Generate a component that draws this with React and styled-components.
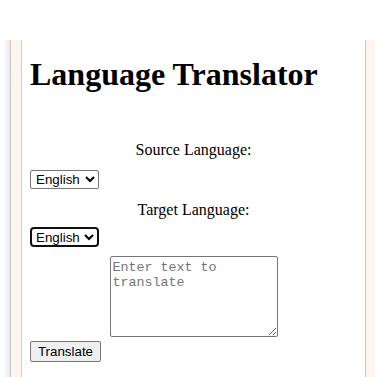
import styled, { createGlobalStyle } from "styled-components";

const GlobalStyle = createGlobalStyle`
    html, body {
        margin: 0;
        padding: 0;
        background: #fff;
        font-family: "Liberation Serif", "Times New Roman", serif;
    }
`;

const Page = styled.div`
    padding-top: 40px;
    height: 377px;
    box-sizing: border-box;
    overflow: hidden;
`;

const Shell = styled.div`
    height: 100%;
    padding-left: 10px;
    background: linear-gradient(to right, #fff 3px, #ebebeb 10px) no-repeat;
    background-size: 10px 100%;
`;

const Frame = styled.div`
    height: 100%;
    display: flex;
    background: #fff5f0;
    border-left: 1px solid #c8c8c8;
    padding-left: 10px;
`;

const Card = styled.div`
    width: 345px;
    background: #fff;
    border-left: 1px solid #d4d0cc;
    border-right: 1px solid #c8c8c8;
    padding: 0 8px;
    display: flex;
    flex-direction: column;
    box-sizing: border-box;
`;

const Title = styled.h1`
    margin: 16px 0 0;
    font-size: 32px;
    font-weight: 700;
    color: #000;
`;

const Label = styled.label`
    display: block;
    text-align: center;
    font-size: 16px;
    color: #000;
    margin-top: ${p => p.$top}px;
`;

const Select = styled.select`
    align-self: flex-start;
    margin-top: ${p => p.$top}px;
    width: 69px;
    height: ${p => (p.$focused ? 20 : 19)}px;
    box-sizing: border-box;
    font-family: "Liberation Sans", Arial, sans-serif;
    font-size: 13.33px;
    color: #000;
    background: #fff;
    border: ${p => (p.$focused ? "2px solid #101010" : "1px solid #767676")};
    border-radius: ${p => (p.$focused ? "4px" : "2px")};
    padding: 0 0 0 ${p => (p.$focused ? 0 : 1)}px;
    outline: none;
`;

const TextArea = styled.textarea`
    align-self: center;
    margin-top: 9px;
    width: 168px;
    height: 81px;
    box-sizing: border-box;
    font-family: "Liberation Mono", "DejaVu Sans Mono", monospace;
    font-size: 13.33px;
    border: 1px solid #767676;
    border-radius: 2px;
    padding: 3px 2px;
    resize: both;

    &::placeholder {
        color: #757575;
    }
`;

const Button = styled.button`
    align-self: flex-start;
    margin-top: 4px;
    width: 71px;
    height: 21px;
    box-sizing: border-box;
    font-family: "Liberation Sans", Arial, sans-serif;
    font-size: 13.33px;
    color: #000;
    background: #efefef;
    border: 1px solid #767676;
    border-radius: 2px;
    padding: 1px 6px;
`;

const App = () => {
    return (
        <>
            <GlobalStyle />
            <Page>
                <Shell>
                    <Frame>
                        <Card>
                            <Title>Language Translator</Title>
                            <Label $top={48} htmlFor="source">Source Language:</Label>
                            <Select id="source" $top={11} defaultValue="en">
                                <option value="en">English</option>
                            </Select>
                            <Label $top={12} htmlFor="target">Target Language:</Label>
                            <Select id="target" $top={8} $focused defaultValue="en">
                                <option value="en">English</option>
                            </Select>
                            <TextArea placeholder="Enter text to translate" />
                            <Button>Translate</Button>
                        </Card>
                    </Frame>
                </Shell>
            </Page>
        </>
    );
};

export default App;
